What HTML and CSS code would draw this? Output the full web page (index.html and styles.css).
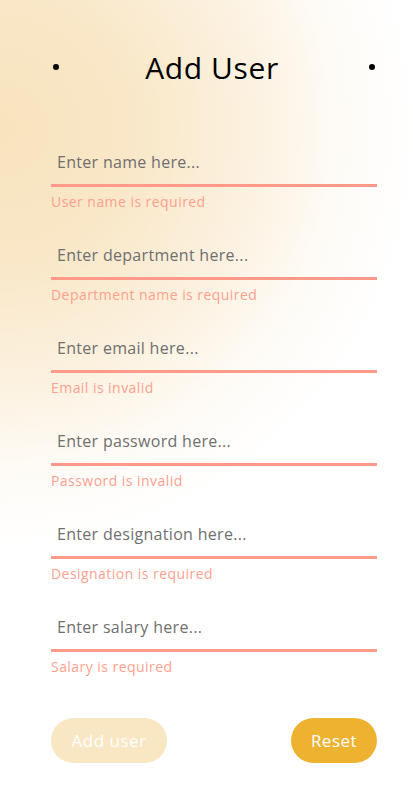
FILE: index.html
```html
<!DOCTYPE html>
<html>
<head>
<meta charset="utf-8">
<link rel="stylesheet" href="styles.css">
</head>
<body>
<div class="page">
  <header class="head">
    <span class="dot"></span>
    <h1 class="title">Add User</h1>
    <span class="dot"></span>
  </header>
  <form class="form">
    <div class="field">
      <input class="input" type="text" placeholder="Enter name here...">
      <div class="error">User name is required</div>
    </div>
    <div class="field">
      <input class="input" type="text" placeholder="Enter department here...">
      <div class="error">Department name is required</div>
    </div>
    <div class="field">
      <input class="input" type="text" placeholder="Enter email here...">
      <div class="error">Email is invalid</div>
    </div>
    <div class="field">
      <input class="input" type="password" placeholder="Enter password here...">
      <div class="error">Password is invalid</div>
    </div>
    <div class="field">
      <input class="input" type="text" placeholder="Enter designation here...">
      <div class="error">Designation is required</div>
    </div>
    <div class="field">
      <input class="input" type="text" placeholder="Enter salary here...">
      <div class="error">Salary is required</div>
    </div>
    <div class="actions">
      <button type="button" class="btn btn-add">Add user</button>
      <button type="button" class="btn btn-reset">Reset</button>
    </div>
  </form>
</div>
</body>
</html>
```
FILE: styles.css
```css
html, body {
  margin: 0;
  padding: 0;
}
body {
  width: 413px;
  height: 797px;
  overflow: hidden;
  font-family: "Open Sans", "Noto Sans", sans-serif;
  background: radial-gradient(circle at 0 130px, #f8e3bd 0, #f9e7c7 130px, #fcf2e1 260px, #fefbf6 340px, #ffffff 420px);
}
.page {
  padding: 0 36px 0 51px;
}
.head {
  display: flex;
  align-items: center;
  justify-content: space-between;
  height: 50px;
  margin-top: 42px;
  padding: 0 2px;
}
.dot {
  width: 6px;
  height: 6px;
  border-radius: 50%;
  background: #000;
}
.title {
  margin: 0;
  font-size: 30px;
  font-weight: 400;
  letter-spacing: 0.6px;
  color: #000;
  padding-right: 4px;
}
.form {
  margin-top: 48px;
  display: flex;
  flex-direction: column;
}
.field {
  display: flex;
  flex-direction: column;
  height: 93px;
}
.input {
  height: 47px;
  box-sizing: border-box;
  border: none;
  border-bottom: 3px solid #ff9a8a;
  background: transparent;
  padding: 0 6px;
  font-family: inherit;
  font-size: 16px;
  letter-spacing: 0.3px;
  color: #333;
  outline: none;
}
.input::placeholder {
  color: #6f6f6f;
}
.error {
  margin-top: 6px;
  font-size: 14px;
  letter-spacing: 0.45px;
  color: #ff9f8e;
  line-height: 18px;
}
.actions {
  display: flex;
  justify-content: space-between;
  margin-top: 20px;
}
.btn {
  height: 45px;
  border: none;
  border-radius: 23px;
  font-family: inherit;
  font-size: 17px;
  letter-spacing: 0.5px;
  color: #fff;
  padding: 0;
}
.btn-add {
  background: #f9e6c2;
  width: 116px;
}
.btn-reset {
  background: #edb230;
  width: 86px;
}
```
